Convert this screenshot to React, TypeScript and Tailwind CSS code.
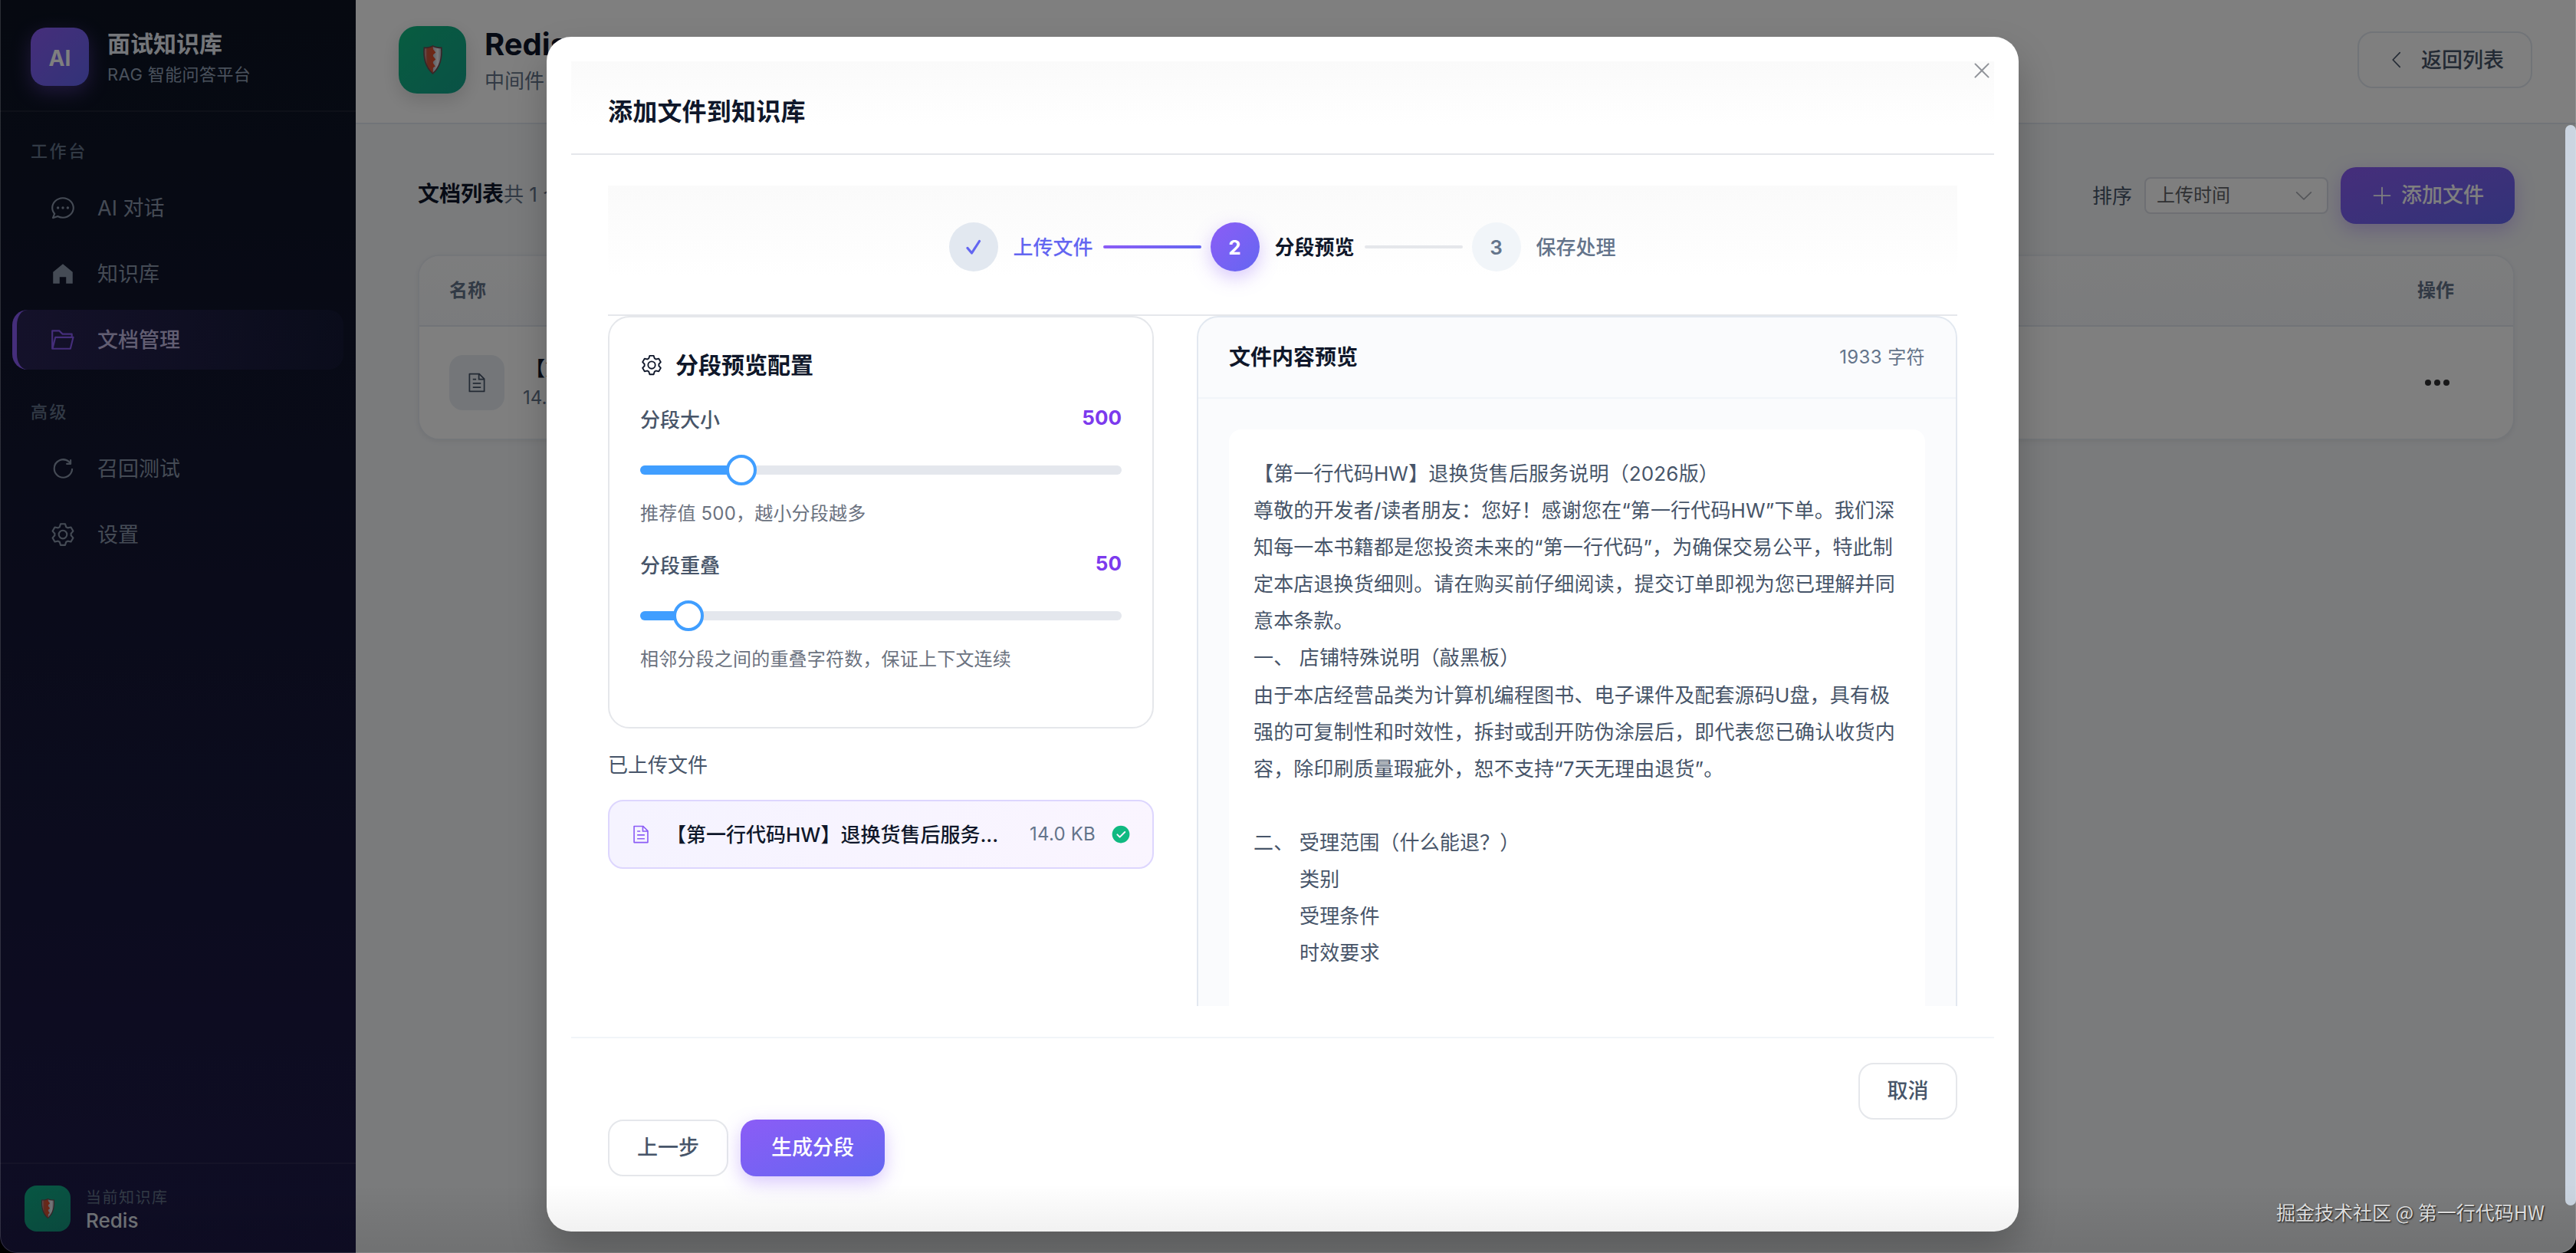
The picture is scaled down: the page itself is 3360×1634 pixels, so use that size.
import React from "react";

const PATHS = {
  chat: "m174.72 855.68 135.296-45.12 23.68 11.84C388.096 849.536 448.576 864 512 864c211.84 0 384-166.784 384-352S723.84 160 512 160 128 326.784 128 512c0 69.12 24.96 139.264 70.848 199.232l22.08 28.8-46.272 115.584zm-45.248 82.56A32 32 0 0 1 89.6 896l58.368-145.92C94.72 680.32 64 596.864 64 512 64 299.904 256 96 512 96s448 203.904 448 416-192 416-448 416a461.056 461.056 0 0 1-206.912-48.384l-175.616 58.56zM512 563.2a51.2 51.2 0 1 1 0-102.4 51.2 51.2 0 0 1 0 102.4zm192 0a51.2 51.2 0 1 1 0-102.4 51.2 51.2 0 0 1 0 102.4zm-384 0a51.2 51.2 0 1 1 0-102.4 51.2 51.2 0 0 1 0 102.4z",
  home: "M512 128 128 447.936V896h255.936V640H640v256h255.936V447.936z",
  folder:
    "M878.08 448H241.92l-96 384h636.16l96-384zM832 384v-64H485.76L357.504 192H128v448l57.92-231.744A32 32 0 0 1 216.96 384H832zm-24.96 512H96a32 32 0 0 1-32-32V160a32 32 0 0 1 32-32h287.872l128.384 128H864a32 32 0 0 1 32 32v96h23.04a32 32 0 0 1 31.04 39.744l-112 448A32 32 0 0 1 807.04 896z",
  refresh:
    "M784.512 230.272v-50.56a32 32 0 1 1 64 0v149.056a32 32 0 0 1-32 32H667.52a32 32 0 1 1 0-64h92.992A320 320 0 1 0 524.8 833.152a320 320 0 0 0 320-320h64a384 384 0 0 1-384 384 384 384 0 0 1-384-384 384 384 0 0 1 643.712-282.88z",
  setting:
    "M600.704 64a32 32 0 0 1 30.464 22.208l35.2 109.376c14.784 7.232 28.928 15.36 42.432 24.512l112.384-24.192a32 32 0 0 1 34.432 15.36L944.32 364.8a32 32 0 0 1-4.032 37.504l-77.12 85.12a357.12 357.12 0 0 1 0 49.024l77.12 85.248a32 32 0 0 1 4.032 37.504l-88.704 153.6a32 32 0 0 1-34.432 15.296L708.8 803.904c-13.44 9.088-27.648 17.28-42.368 24.512l-35.264 109.376A32 32 0 0 1 600.704 960H423.296a32 32 0 0 1-30.464-22.208L357.696 828.48a351.616 351.616 0 0 1-42.56-24.64l-112.32 24.256a32 32 0 0 1-34.432-15.36L79.68 659.2a32 32 0 0 1 4.032-37.504l77.12-85.248a357.12 357.12 0 0 1 0-48.896l-77.12-85.248A32 32 0 0 1 79.68 364.8l88.704-153.6a32 32 0 0 1 34.432-15.296l112.32 24.256c13.568-9.152 27.776-17.408 42.56-24.64l35.2-109.312A32 32 0 0 1 423.232 64H600.64zm-23.424 64H446.72l-36.352 113.088-24.512 11.968a294.113 294.113 0 0 0-34.816 20.096l-22.656 15.36-116.224-25.088-65.28 113.152 79.68 88.192-1.92 27.136a293.12 293.12 0 0 0 0 40.192l1.92 27.136-79.808 88.192 65.344 113.152 116.224-25.024 22.656 15.296a294.113 294.113 0 0 0 34.816 20.096l24.512 11.968L446.72 896h130.688l36.48-113.152 24.448-11.904a288.282 288.282 0 0 0 34.752-20.096l22.592-15.296 116.288 25.024 65.28-113.152-79.744-88.192 1.92-27.136a293.12 293.12 0 0 0 0-40.256l-1.92-27.136 79.808-88.128-65.344-113.152-116.288 24.96-22.592-15.232a287.616 287.616 0 0 0-34.752-20.096l-24.448-11.904L577.344 128zM512 320a192 192 0 1 1 0 384 192 192 0 0 1 0-384zm0 64a128 128 0 1 0 0 256 128 128 0 0 0 0-256z",
  document:
    "M832 384H576V128H192v768h640V384zm-26.496-64L640 154.496V320h165.504zM160 64h480l256 256v608a32 32 0 0 1-32 32H160a32 32 0 0 1-32-32V96a32 32 0 0 1 32-32zm160 448h384v64H320v-64zm0-192h160v64H320v-64zm0 384h384v64H320v-64z",
  arrowLeft:
    "M609.408 149.376 277.76 489.6a32 32 0 0 0 0 44.672l331.648 340.352a29.12 29.12 0 0 0 41.728 0 30.592 30.592 0 0 0 0-42.752L339.264 511.936l311.872-319.872a30.592 30.592 0 0 0 0-42.688 29.12 29.12 0 0 0-41.728 0z",
  arrowDown:
    "M831.872 340.864 512 652.672 192.128 340.864a30.592 30.592 0 0 0-42.752 0 29.12 29.12 0 0 0 0 41.6L489.664 714.24a32 32 0 0 0 44.672 0l340.288-331.712a29.12 29.12 0 0 0 0-41.728 30.592 30.592 0 0 0-42.752 0z",
  plus: "M480 480V128a32 32 0 0 1 64 0v352h352a32 32 0 1 1 0 64H544v352a32 32 0 1 1-64 0V544H128a32 32 0 0 1 0-64h352z",
  circleCheck:
    "M512 64a448 448 0 1 1 0 896 448 448 0 0 1 0-896zm-55.808 536.384-99.52-99.584a38.4 38.4 0 1 0-54.336 54.336l126.72 126.72a38.272 38.272 0 0 0 54.336 0l262.4-262.464a38.4 38.4 0 1 0-54.272-54.336L456.192 600.384z",
  close:
    "M764.288 214.592 512 466.88 259.712 214.592a31.936 31.936 0 0 0-45.12 45.12L466.752 512 214.528 764.224a31.936 31.936 0 1 0 45.12 45.184L512 557.184l252.288 252.288a31.936 31.936 0 0 0 45.12-45.12L557.12 512.064l252.288-252.352a31.936 31.936 0 1 0-45.12-45.184z",
};

function Icon({ name, className }: { name: keyof typeof PATHS; className: string }) {
  return (
    <svg viewBox="0 0 1024 1024" fill="currentColor" className={`shrink-0 ${className}`}>
      <path d={PATHS[name]} />
    </svg>
  );
}

function Shield({ className }: { className: string }) {
  return (
    <svg viewBox="0 0 28 42" className={className}>
      <defs>
        <linearGradient id="shield-left" x1="0" x2="1" y1="0" y2="0">
          <stop offset="0" stopColor="#c9a3a8" />
          <stop offset="0.350" stopColor="#c4573f" />
          <stop offset="1" stopColor="#dd4f2c" />
        </linearGradient>
        <linearGradient id="shield-right" x1="0" x2="1" y1="0" y2="0">
          <stop offset="0" stopColor="#b9bcc6" />
          <stop offset="0.600" stopColor="#f6f6fa" />
          <stop offset="1" stopColor="#b5b5c0" />
        </linearGradient>
      </defs>
      <path d="M14 1C17 3 22 4 26.500 3.500C28 18 25 32 14 41C3 32 0 18 1.500 3.500C6 4 11 3 14 1Z" fill="#6f4a50" />
      <path d="M14 3C17 4.800 21 5.600 25 5.400C26 18 23 30.500 14 38.500Z" fill="url(#shield-right)" />
      <path d="M14 3C11 4.800 7 5.600 3 5.400C2 18 5 30.500 14 38.500Z" fill="url(#shield-left)" />
      <path d="M12.500 4L18 11L13.500 15L18 20.500L13.500 24.500L17.500 30L12.500 33Z" fill="#dd4f2c" />
    </svg>
  );
}

type NavItemProps = { icon: keyof typeof PATHS; label: string; active?: boolean };

function NavItem({ icon, label, active }: NavItemProps) {
  return (
    <div
      className={
        active
          ? "flex h-[78px] items-center gap-7 rounded-[20px] border-l-[6px] border-[#8b5cf6] bg-linear-to-r from-[#8b5cf6]/20 to-[#6366f1]/5 pl-[43px] text-[27px] font-medium text-[#c4bde4]"
          : "flex h-[78px] items-center gap-7 rounded-[20px] pl-[49px] text-[27px] text-[#8a97ab]"
      }
    >
      <Icon name={icon} className={active ? "size-[34px] text-[#8b5cf6]" : "size-[34px]"} />
      <span className="pt-[2px]">{label}</span>
    </div>
  );
}

function Sidebar() {
  return (
    <aside className="flex w-[464px] shrink-0 flex-col bg-linear-to-b from-[#0c1322] to-[#1e1a4a]">
      <div className="flex h-[146px] items-center gap-[24px] border-b-2 border-white/6 pt-1 pl-10">
        <div className="flex size-[76px] items-center justify-center rounded-[20px] bg-linear-to-br from-[#8b5cf6] to-[#6366f1] pt-[3px] text-[28px] font-bold text-white shadow-[0_8px_24px_rgba(139,92,246,0.4)]">
          AI
        </div>
        <div className="flex flex-col pt-1">
          <span className="text-[30px] leading-[42px] font-semibold text-[#e8edf4]">面试知识库</span>
          <span className="text-[22px] leading-[38px] tracking-[0.400px] text-[#94a3b8]">RAG 智能问答平台</span>
        </div>
      </div>
      <nav className="flex flex-1 flex-col px-4 pt-[31px]">
        <div className="pl-6 text-[22px] leading-10 font-medium tracking-[2.600px] text-[#64748b]">工作台</div>
        <div className="mt-[15px] flex flex-col gap-2">
          <NavItem icon="chat" label="AI 对话" />
          <NavItem icon="home" label="知识库" />
          <NavItem icon="folder" label="文档管理" active />
        </div>
        <div className="mt-[35px] pl-6 text-[22px] leading-10 font-medium tracking-[2.600px] text-[#64748b]">高级</div>
        <div className="mt-[15px] flex flex-col gap-2">
          <NavItem icon="refresh" label="召回测试" />
          <NavItem icon="setting" label="设置" />
        </div>
      </nav>
      <div className="flex h-[118px] items-center gap-[20px] border-t-2 border-white/6 pl-8">
        <div className="flex size-[60px] items-center justify-center rounded-2xl bg-linear-to-br from-[#0fae86] to-[#159a83]">
          <Shield className="h-[28px] w-[19px]" />
        </div>
        <div className="flex flex-col pt-[2px]">
          <span className="text-[20px] leading-[30px] tracking-[1.500px] text-[#64748b]">当前知识库</span>
          <span className="text-[26px] leading-[30px] font-medium text-[#e2e8f0]">Redis</span>
        </div>
      </div>
    </aside>
  );
}

function PageHeader() {
  return (
    <header className="flex h-[162px] items-center justify-between border-b-2 border-[#e2e8f0] bg-white pr-[57px] pb-[4px] pl-14">
      <div className="flex items-center gap-[24px]">
        <div className="flex size-[88px] items-center justify-center rounded-3xl bg-linear-to-br from-[#10b981] to-[#14a38b] shadow-[0_8px_24px_rgba(0,0,0,0.15)]">
          <Shield className="h-[40px] w-[27px]" />
        </div>
        <div className="flex flex-col pt-[5px]">
          <span className="text-[40px] leading-[50px] font-bold text-[#0f172a]">Redis</span>
          <span className="text-[26px] leading-[46px] text-[#64748b]">中间件</span>
        </div>
      </div>
      <div className="flex h-[74px] w-[228px] items-center rounded-[20px] border-2 border-[#e2e8f0] pl-[36px] text-[27px] font-medium text-[#475569]">
        <Icon name="arrowLeft" className="size-[28px]" />
        <span className="ml-[17px] pt-[2px]">返回列表</span>
      </div>
    </header>
  );
}

function Documents() {
  return (
    <section className="flex flex-col pt-[56px] pr-[80px] pl-[81px]">
      <div className="flex h-[74px] items-center justify-between">
        <div className="-mt-1 flex items-center">
          <span className="text-[28px] font-semibold text-[#0f172a]">文档列表</span>
          <span className="text-[26px] text-[#64748b]">共 1 个</span>
        </div>
        <div className="flex items-center">
          <span className="text-[26px] text-[#475569]">排序</span>
          <div className="ml-4 flex h-12 w-[240px] items-center justify-between rounded-lg border-2 border-[#dcdfe6] bg-white pr-[16px] pl-[14px] text-[24px] text-[#606266]">
            <span>上传时间</span>
            <Icon name="arrowDown" className="size-[28px] text-[#a8abb2]" />
          </div>
          <div className="ml-4 flex h-[74px] w-[227px] items-center rounded-[20px] bg-linear-to-br from-[#8b5cf6] to-[#6366f1] pl-[40px] text-[27px] font-medium text-white shadow-[0_8px_24px_rgba(139,92,246,0.35)]">
            <Icon name="plus" className="size-[28px]" />
            <span className="ml-[11px]">添加文件</span>
          </div>
        </div>
      </div>
      <div className="mt-[40px] flex flex-col overflow-hidden rounded-[28px] border-2 border-[#e9edf3] bg-white shadow-[0_2px_6px_rgba(0,0,0,0.06)]">
        <div className="flex h-[92px] items-center justify-between border-b-2 border-[#e2e8f0] bg-linear-to-b from-[#fafbfc] to-[#f5f7fa] pr-[77px] pl-[39px] text-[24px] font-semibold text-[#64748b]">
          <span>名称</span>
          <span>操作</span>
        </div>
        <div className="flex h-[146px] items-center justify-between pr-[83px] pl-[39px]">
          <div className="flex items-center">
            <div className="flex size-[72px] items-center justify-center rounded-[18px] bg-[#e8edf3] text-[#475569]">
              <Icon name="document" className="size-[28px]" />
            </div>
            <div className="ml-[24px] flex flex-col">
              <span className="w-[56px] overflow-hidden pl-[3px] text-[26px] leading-[40px] font-semibold whitespace-nowrap text-[#0f172a]">
                【第
              </span>
              <span className="text-[24px] leading-[36px] text-[#64748b]">14.0 KB</span>
            </div>
          </div>
          <div className="flex gap-1">
            <span className="size-2 rounded-full bg-[#303133]" />
            <span className="size-2 rounded-full bg-[#303133]" />
            <span className="size-2 rounded-full bg-[#303133]" />
          </div>
        </div>
      </div>
    </section>
  );
}

function Steps() {
  return (
    <div className="flex h-[170px] shrink-0 items-start justify-center border-b-2 border-[#e5e7eb] bg-linear-to-b from-[#fafafa] to-white to-70% pt-12 text-[26px]">
      <div className="flex items-center">
        <span className="flex size-16 items-center justify-center rounded-full bg-[#e2e8f0]">
          <svg viewBox="0 0 20 22" fill="none" stroke="#6366f1" strokeWidth="3.200" strokeLinecap="round" strokeLinejoin="round" className="h-[22px] w-5">
            <path d="M2 12.500L7.500 19L17.500 3.500" />
          </svg>
        </span>
        <span className="ml-5 w-[105px] pt-px font-medium whitespace-nowrap text-[#6366f1]">上传文件</span>
        <span className="mx-3 h-1 w-32 rounded-sm bg-linear-to-r from-[#8b5cf6] to-[#6366f1]" />
        <span className="flex size-16 items-center justify-center rounded-full bg-linear-to-br from-[#8b5cf6] to-[#6366f1] font-bold text-white shadow-[0_8px_24px_rgba(139,92,246,0.35)]">
          2
        </span>
        <span className="ml-5 w-[105px] pt-px font-semibold whitespace-nowrap text-[#0f172a]">分段预览</span>
        <span className="mx-3 h-1 w-32 rounded-sm bg-[#e5e7eb]" />
        <span className="flex size-16 items-center justify-center rounded-full bg-[#f1f5f9] font-semibold text-[#64748b]">3</span>
        <span className="ml-5 w-[105px] pt-px font-medium whitespace-nowrap text-[#64748b]">保存处理</span>
      </div>
    </div>
  );
}

function Slider({ percent }: { percent: number }) {
  return (
    <div className="relative flex h-10 items-center">
      <div className="h-3 w-full overflow-hidden rounded-full bg-[#e4e7ed]">
        <div className="h-full bg-[#409eff]" style={{ width: `${percent}%` }} />
      </div>
      <div
        className="absolute top-0 size-10 -translate-x-1/2 rounded-full border-4 border-[#409eff] bg-white"
        style={{ left: `${percent}%` }}
      />
    </div>
  );
}

function Config() {
  return (
    <div className="flex w-[712px] flex-col">
      <div className="flex h-[538px] flex-col rounded-[28px] border-2 border-[#e5e7eb] bg-white px-10 pt-[42px]">
        <div className="flex h-10 items-center gap-[16px] text-[#0f172a]">
          <Icon name="setting" className="size-[30px]" />
          <span className="text-[30px] font-semibold">分段预览配置</span>
        </div>
        <div className="mt-[31px] flex h-10 items-center justify-between text-[26px]">
          <span className="font-medium text-[#475569]">分段大小</span>
          <span className="pb-[6px] font-bold text-[#7c3aed]">500</span>
        </div>
        <div className="mt-[26px]">
          <Slider percent={21} />
        </div>
        <div className="mt-[19px] text-[24px] leading-9 tracking-[0.200px] text-[#6b7280]">推荐值 500，越小分段越多</div>
        <div className="mt-[29px] flex h-10 items-center justify-between text-[26px]">
          <span className="font-medium text-[#475569]">分段重叠</span>
          <span className="pb-[6px] font-bold text-[#7c3aed]">50</span>
        </div>
        <div className="mt-[26px]">
          <Slider percent={10} />
        </div>
        <div className="mt-[19px] text-[24px] leading-9 tracking-[0.200px] text-[#6b7280]">相邻分段之间的重叠字符数，保证上下文连续</div>
      </div>
      <div className="mt-[28px] text-[26px] leading-10 text-[#475569]">已上传文件</div>
      <div className="mt-[25px] flex h-[90px] items-center rounded-[20px] border-2 border-[#ddd6fe] bg-linear-to-r from-[#f5f3ff] to-[#faf5ff] pr-[28px] pl-[28px]">
        <Icon name="document" className="size-[26px] text-[#8b5cf6]" />
        <span className="ml-[20px] text-[26px] font-medium whitespace-nowrap text-[#0f172a]">【第一行代码HW】退换货售后服务...</span>
        <span className="ml-auto text-[24px] tracking-[0.200px] whitespace-nowrap text-[#64748b]">14.0 KB</span>
        <Icon name="circleCheck" className="ml-[20px] size-[26px] text-[#10b981]" />
      </div>
    </div>
  );
}

const LINES = [
  "【第一行代码HW】退换货售后服务说明（2026版）",
  "尊敬的开发者/读者朋友：您好！感谢您在“第一行代码HW”下单。我们深",
  "知每一本书籍都是您投资未来的“第一行代码”，为确保交易公平，特此制",
  "定本店退换货细则。请在购买前仔细阅读，提交订单即视为您已理解并同",
  "意本条款。",
  "一、 店铺特殊说明（敲黑板）",
  "由于本店经营品类为计算机编程图书、电子课件及配套源码U盘，具有极",
  "强的可复制性和时效性，拆封或刮开防伪涂层后，即代表您已确认收货内",
  "容，除印刷质量瑕疵外，恕不支持“7天无理由退货”。",
  "",
  "二、 受理范围（什么能退？）",
];
const INDENTED = ["类别", "受理条件", "时效要求"];

function Preview() {
  return (
    <div className="flex h-[1200px] w-[992px] shrink-0 flex-col rounded-[28px] border-2 border-[#e2e8f0] bg-[#fafbfd]">
      <div className="flex h-[106px] shrink-0 items-center justify-between border-b-2 border-[#f1f5f9] px-10">
        <span className="text-[28px] font-semibold text-[#0f172a]">文件内容预览</span>
        <span className="text-[24px] tracking-[0.400px] text-[#64748b]">1933 字符</span>
      </div>
      <div className="mx-10 mt-10 flex-1 rounded-2xl bg-white px-8 pt-[34px]">
        {LINES.map((line, i) => (
          <p key={i} className="h-[48.100px] text-[26px] leading-[48.100px] tracking-[0.150px] whitespace-nowrap text-[#475569]">
            {line}
          </p>
        ))}
        {INDENTED.map((line) => (
          <p key={line} className="h-[48.100px] pl-[60px] text-[26px] leading-[48.100px] tracking-[0.150px] text-[#475569]">
            {line}
          </p>
        ))}
      </div>
    </div>
  );
}

function Modal() {
  return (
    <div className="relative flex h-[1558px] w-[1920px] flex-col rounded-[32px] bg-white p-8 shadow-[0_25px_50px_rgba(0,0,0,0.22)]">
      <Icon name="close" className="absolute top-[28px] right-[32px] size-8 text-[#909399]" />
      <div className="h-[122px] shrink-0 border-b-2 border-[#e5e7eb] bg-linear-to-b from-[#fafafa] to-white to-70% pt-[46px] pl-12 text-[32px] leading-10 font-semibold tracking-[0.200px] text-[#0f172a]">
        添加文件到知识库
      </div>
      <div className="flex h-[1110px] shrink-0 flex-col px-12 pt-10">
        <Steps />
        <div className="flex h-[900px] items-start gap-14 overflow-hidden">
          <Config />
          <Preview />
        </div>
      </div>
      <div className="mt-10 flex flex-col border-t-2 border-[#f1f5f9] px-12 pt-8 text-[27px] font-medium text-[#475569]">
        <div className="flex justify-end">
          <div className="flex h-[74px] w-[129px] items-center justify-center rounded-[20px] border-2 border-[#e5e7eb] pt-px">取消</div>
        </div>
        <div className="flex gap-4">
          <div className="flex h-[74px] w-[157px] items-center justify-center rounded-[20px] border-2 border-[#e5e7eb] pt-px">上一步</div>
          <div className="flex h-[74px] w-[188px] items-center justify-center rounded-[20px] bg-linear-to-br from-[#8b5cf6] to-[#6366f1] pt-px text-white shadow-[0_8px_24px_rgba(139,92,246,0.35)]">
            生成分段
          </div>
        </div>
      </div>
    </div>
  );
}

export default function App() {
  return (
    <div className="h-[1634px] w-[3360px] overflow-hidden bg-black font-['Inter','Noto_Sans_CJK_SC',sans-serif]">
      <div className="relative flex h-full w-full overflow-hidden rounded-b-[22px]">
        <Sidebar />
        <main className="flex flex-1 flex-col bg-[#f4f6f9]">
          <PageHeader />
          <Documents />
        </main>
        <div className="absolute inset-0 flex justify-center bg-black/50 pt-12 pr-[14px]">
          <Modal />
        </div>
        <div className="absolute top-[163px] right-0 h-[1409px] w-[14px] rounded-full bg-[#cbd5e1]" />
        <div className="absolute inset-x-0 bottom-0 h-[90px] bg-linear-to-b from-transparent to-black/8" />
        <div className="absolute inset-0 rounded-b-[22px] border-x border-b border-white/15" />
        <div className="absolute right-[41px] bottom-[36px] text-[25px] leading-9 whitespace-nowrap text-[#dcdcdc] [font-family:'Noto_Sans_CJK_SC',sans-serif] [text-shadow:1px_1px_2px_rgba(0,0,0,0.9)]">
          掘金技术社区 @ 第一行代码HW
        </div>
      </div>
    </div>
  );
}
